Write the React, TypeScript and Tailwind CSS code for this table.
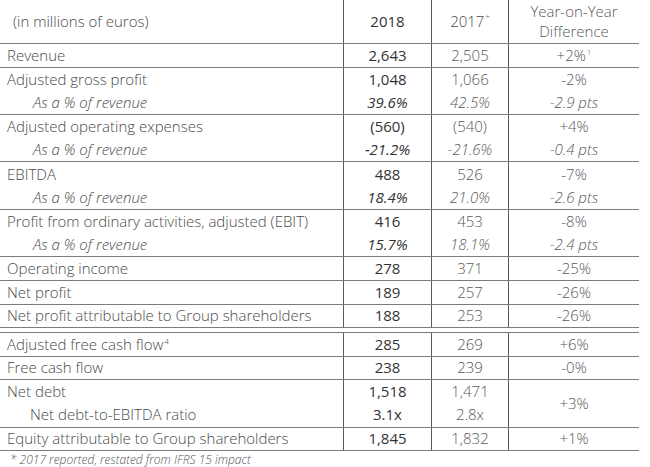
import React from "react";

type Line = {
  label: React.ReactNode;
  indent?: number;
  italic?: boolean;
  v18: string;
  v17: string;
  diff?: React.ReactNode;
};
type Group = { lines: Line[]; spanDiff?: React.ReactNode };

const sup = (t: string) => (
  <span className="inline-block text-[8px] leading-none -translate-y-[6px] ml-[1px]">{t}</span>
);

const table1: Group[] = [
  { lines: [{ label: "Revenue", v18: "2,643", v17: "2,505", diff: <span>+2%{sup("1")}</span> }] },
  {
    lines: [
      { label: "Adjusted gross profit", v18: "1,048", v17: "1,066", diff: "-2%" },
      { label: "As a % of revenue", indent: 33, italic: true, v18: "39.6%", v17: "42.5%", diff: "-2.9 pts" },
    ],
  },
  {
    lines: [
      { label: "Adjusted operating expenses", v18: "(560)", v17: "(540)", diff: "+4%" },
      { label: "As a % of revenue", indent: 33, italic: true, v18: "-21.2%", v17: "-21.6%", diff: "-0.4 pts" },
    ],
  },
  {
    lines: [
      { label: "EBITDA", v18: "488", v17: "526", diff: "-7%" },
      { label: "As a % of revenue", indent: 33, italic: true, v18: "18.4%", v17: "21.0%", diff: "-2.6 pts" },
    ],
  },
  {
    lines: [
      { label: "Profit from ordinary activities, adjusted (EBIT)", v18: "416", v17: "453", diff: "-8%" },
      { label: "As a % of revenue", indent: 33, italic: true, v18: "15.7%", v17: "18.1%", diff: "-2.4 pts" },
    ],
  },
  { lines: [{ label: "Operating income", v18: "278", v17: "371", diff: "-25%" }] },
  { lines: [{ label: "Net profit", v18: "189", v17: "257", diff: "-26%" }] },
  { lines: [{ label: "Net profit attributable to Group shareholders", v18: "188", v17: "253", diff: "-26%" }] },
];

const table2: Group[] = [
  { lines: [{ label: <span>Adjusted free cash flow{sup("4")}</span>, v18: "285", v17: "269", diff: "+6%" }] },
  { lines: [{ label: "Free cash flow", v18: "238", v17: "239", diff: "-0%" }] },
  {
    lines: [
      { label: "Net debt", v18: "1,518", v17: "1,471" },
      { label: "Net debt-to-EBITDA ratio", indent: 30, v18: "3.1x", v17: "2.8x" },
    ],
    spanDiff: "+3%",
  },
  { lines: [{ label: "Equity attributable to Group shareholders", v18: "1,845", v17: "1,832", diff: "+1%" }] },
];

const vline = "border-l border-[#5a5a5a]";

function GroupRow({ g }: { g: Group }) {
  const h = g.lines.length === 1 ? "h-[23.7px]" : "h-[47.4px]";
  return (
    <div className={`flex ${h} border-t border-[#7c7c7c]`}>
      <div className="w-[343px] flex flex-col">
        {g.lines.map((l, i) => (
          <div
            key={i}
            className={`flex-1 flex items-center text-[#4a4a4a] whitespace-nowrap ${l.italic ? "italic" : ""}`}
            style={{ paddingLeft: l.indent ?? 7 }}
          >
            {l.label}
          </div>
        ))}
      </div>
      <div className={`w-[88px] flex flex-col ${vline}`}>
        {g.lines.map((l, i) => (
          <div
            key={i}
            className={`flex-1 flex items-center justify-center font-medium text-[#333] ${l.italic ? "italic" : ""}`}
          >
            {l.v18}
          </div>
        ))}
      </div>
      <div className={`w-[77px] flex flex-col ${vline}`}>
        {g.lines.map((l, i) => (
          <div
            key={i}
            className={`flex-1 flex items-center justify-center text-[#5a5a5a] ${l.italic ? "italic" : ""}`}
          >
            {l.v17}
          </div>
        ))}
      </div>
      <div className={`w-[131px] flex flex-col ${vline}`}>
        {g.spanDiff ? (
          <div className="flex-1 flex items-center justify-center text-[#5a5a5a]">{g.spanDiff}</div>
        ) : (
          g.lines.map((l, i) => (
            <div
              key={i}
              className={`flex-1 flex items-center justify-center text-[#5a5a5a] ${l.italic ? "italic" : ""}`}
            >
              {l.diff}
            </div>
          ))
        )}
      </div>
    </div>
  );
}

export default function App() {
  return (
    <div
      className="w-[650px] h-[467px] bg-white text-[15px] font-light leading-none"
      style={{ fontFamily: '"Open Sans", "Liberation Sans", sans-serif' }}
    >
      <div className="w-[639px]">
        <div className="flex h-[43px]">
          <div className="w-[343px] flex items-center pl-[13px] text-[#4a4a4a]">(in millions of euros)</div>
          <div className={`w-[88px] flex items-center justify-center text-[#333] font-normal ${vline}`}>2018</div>
          <div className={`w-[77px] flex items-center justify-center text-[#4a4a4a] ${vline}`}>
            <span>2017{sup("*")}</span>
          </div>
          <div className={`w-[131px] flex flex-col items-center justify-center gap-[5px] text-[#5a5a5a] ${vline}`}>
            <span>Year-on-Year</span>
            <span>Difference</span>
          </div>
        </div>
        {table1.map((g, i) => (
          <GroupRow key={i} g={g} />
        ))}
        <div className="border-t border-[#7c7c7c]" />
        <div className="mt-[3.5px]">
          {table2.map((g, i) => (
            <GroupRow key={i} g={g} />
          ))}
          <div className="border-t border-[#7c7c7c]" />
        </div>
        <div className="pl-[10px] pt-[3px] text-[12px] italic text-[#555]">
          * 2017 reported, restated from IFRS 15 impact
        </div>
      </div>
    </div>
  );
}
